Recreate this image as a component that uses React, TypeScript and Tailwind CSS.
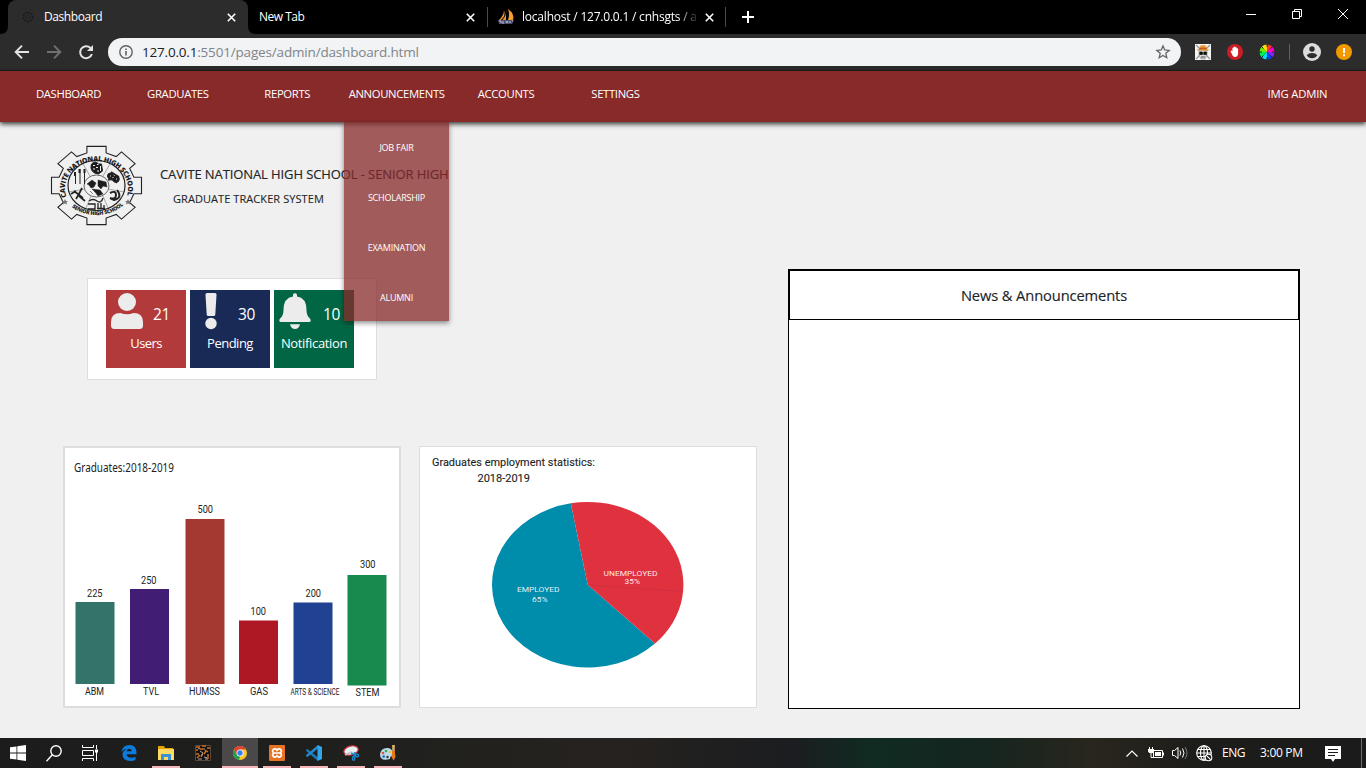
import React from "react";

function TabX() {
  return (
    <svg width="9" height="9" viewBox="0 0 9 9" stroke="#fff" strokeWidth="1.6">
      <path d="M.8.8l7.4 7.4M8.2.8L.8 8.2" />
    </svg>
  );
}

function TabStrip() {
  return (
    <div className="flex h-[34px] bg-black text-white text-[12px]">
      <svg width="8" height="34" viewBox="0 0 8 34">
        <path d="M8 26v8H0Q8 34 8 26z" fill="#2c2c2c" />
      </svg>
      <div className="flex h-[34px] w-[240px] items-center rounded-t-lg bg-[#2c2c2c] pl-[14px] pr-[12px]">
        <svg width="12" height="12" viewBox="0 0 12 12" fill="none" stroke="#1b1b1b">
          <circle cx="6" cy="6" r="4.6" strokeWidth="1.6" strokeDasharray="2 1" />
          <circle cx="6" cy="6" r="2" strokeDasharray="1.5 1" />
        </svg>
        <span className="ml-[10px] flex-1 tracking-[-0.42px]">Dashboard</span>
        <TabX />
      </div>
      <svg width="8" height="34" viewBox="0 0 8 34">
        <path d="M0 26v8h8Q0 34 0 26z" fill="#2c2c2c" />
      </svg>
      <div className="flex h-[34px] w-[231px] items-center pl-[3px] pr-[12px]">
        <span className="flex-1 tracking-[-0.5px]">New Tab</span>
        <TabX />
      </div>
      <div className="mt-[7px] h-5 w-px bg-[#4a4a4a]" />
      <div className="flex h-[34px] w-[237px] items-center pl-[10px] pr-[11px]">
        <svg width="17" height="16" viewBox="0 0 17 16">
          <path d="M6 1Q8 7 3 11H1Q6 6 6 1zM8 0v11H4.500Q9 6 8 0z" fill="#e9952c" />
          <path d="M10 0Q17 5 15 11H10Q12 5 10 0z" fill="#f7a133" />
          <path d="M0 11h16l-2 4H1z" fill="#4c5070" />
          <path d="M1 12h2v2M5 12v3M8 12l1 2 1-2M12 12v2M14 12h1" stroke="#b9bed4" fill="none" />
        </svg>
        <span className="ml-[7px] w-[174px] overflow-hidden whitespace-nowrap tracking-[-0.21px] [mask-image:linear-gradient(to_right,black_155px,transparent_178px)]">
          localhost / 127.0.0.1 / cnhsgts / a
        </span>
        <span className="flex-1" />
        <TabX />
      </div>
      <div className="mt-[7px] h-5 w-px bg-[#4a4a4a]" />
      <svg className="ml-[16px] mt-[11px]" width="12" height="12" viewBox="0 0 12 12" stroke="#fff" strokeWidth="2">
        <path d="M6 0v12M0 6h12" />
      </svg>
      <div className="flex flex-1 items-start justify-end pr-[16px] pt-[9px]">
        <svg width="104" height="11" viewBox="0 0 104 11" fill="none" stroke="#fff">
          <path d="M0 5.500h10M46.500 2.500h7v7h-7zM48.500 2.500v-2h7v7h-2M92 0l10 10M102 0L92 10" />
        </svg>
      </div>
    </div>
  );
}

function Toolbar() {
  return (
    <div className="flex h-[37px] items-start border-b border-[#1c1c1c] bg-[#2c2c2c] pt-1">
      <div className="flex h-7 w-[108px] items-center">
        <svg className="ml-[14px]" width="16" height="16" viewBox="0 0 16 16" fill="none" stroke="#e3e3e3" strokeWidth="1.9">
          <path d="M15 8H2.500M8 1.700L1.700 8 8 14.300" />
        </svg>
        <svg className="ml-[16px]" width="16" height="16" viewBox="0 0 16 16" fill="none" stroke="#707070" strokeWidth="1.9">
          <path d="M1 8h12.500M8 1.700L14.300 8 8 14.300" />
        </svg>
        <svg className="ml-[16px]" width="16" height="16" viewBox="0 0 16 16" fill="none" stroke="#e3e3e3" strokeWidth="2">
          <path d="M13.900 10A6 6 0 1 1 12.300 3.800L13.500 5" />
          <path d="M15 1v6H9z" fill="#e3e3e3" stroke="none" />
        </svg>
      </div>
      <div className="flex h-7 w-[1073px] items-center rounded-full bg-[#f1f3f4] pl-[11px] pr-[10px]">
        <svg width="14" height="14" viewBox="0 0 14 14" fill="none" stroke="#5f6368" strokeWidth="1.4">
          <circle cx="7" cy="7" r="6.200" />
          <path d="M7 6v4.500M7 3.400v1.500" strokeWidth="1.600" />
        </svg>
        <span className="ml-[9px] flex-1 pt-px text-[13.5px] leading-none text-[#808489]">
          <span className="text-[#202124] tracking-[-0.2px]">127.0.0.1</span><span className="tracking-[-0.17px]">:5501/pages/admin/dashboard.html</span>
        </span>
        <svg width="16" height="16" viewBox="0 0 16 16" fill="none" stroke="#5f6368" strokeWidth="1.300">
          <path d="M8 1.900l1.700 4.100 4.500.4-3.400 2.900 1 4.400L8 11.400l-3.800 2.300 1-4.400-3.400-2.900 4.500-.4z" />
        </svg>
      </div>
      <div className="flex h-7 flex-1 items-center">
        <svg className="ml-[14px]" width="16" height="16" viewBox="0 0 16 16">
          <path d="M0 0h16v16H0z" fill="#f5f5f2" />
          <path d="M1 1l14 14M15 1L1 15" stroke="#999" strokeWidth="1.300" />
          <path d="M4 6h8v5l-2 4H6l-2-4z" fill="#e5e5e5" stroke="#777" strokeWidth=".6" />
          <path d="M4 5Q4 1 8 1t4 4z" fill="#e8a43a" />
          <path d="M1 6Q8 3 15 6 8 7.200 1 6z" fill="#d68a25" />
          <path d="M4.500 4.500Q8 3.500 11.500 4.500" stroke="#b73c25" fill="none" />
          <path d="M4.800 8h2.600v2.600H4.800zM8.800 8h2.600v2.600H8.800zM6 13h4" fill="#111" stroke="#111" strokeWidth=".8" />
        </svg>
        <svg className="ml-[16px]" width="16" height="16" viewBox="0 0 16 16">
          <circle cx="8" cy="8" r="8" fill="#cc1c27" />
          <path d="M4.200 8.400L3.400 7l.9-.6 1.100 1.100V4q.7-.9 1.300 0V3q.8-.9 1.500 0v.4q.8-.8 1.400.1v1q1.200-.7 1.500.3v4.700Q10.800 12.900 8.200 12.900T4.200 8.400z" fill="#fff" />
        </svg>
        <svg className="ml-[16px]" width="16" height="16" viewBox="0 0 16 16">
          <path d="M8 8V.5A7.500 7.500 0 0 1 13.300 2.700z" fill="#f33" />
          <path d="M8 8l5.300-5.300A7.500 7.500 0 0 1 15.500 8z" fill="#f0c" />
          <path d="M8 8h7.500a7.500 7.500 0 0 1-2.200 5.300z" fill="#82f" />
          <path d="M8 8l5.300 5.300A7.500 7.500 0 0 1 8 15.500z" fill="#04e" />
          <path d="M8 8v7.500a7.500 7.500 0 0 1-5.300-2.200z" fill="#0df" />
          <path d="M8 8l-5.300 5.300A7.500 7.500 0 0 1 .5 8z" fill="#0e5" />
          <path d="M8 8H.5A7.500 7.500 0 0 1 2.700 2.700z" fill="#6e0" />
          <path d="M8 8L2.700 2.700A7.500 7.500 0 0 1 8 .5z" fill="#fd0" />
          <path d="M8 0v3M8 13v3M0 8h3M13 8h3M2.500 2.500l2 2M13.500 2.500l-2 2M2.500 13.500l2-2M13.500 13.500l-2-2" stroke="#1c1c1c" strokeWidth=".9" />
        </svg>
        <div className="ml-[14px] h-4 w-px bg-[#606060]" />
        <svg className="ml-[13px]" width="18" height="18" viewBox="0 0 18 18">
          <circle cx="9" cy="9" r="9" fill="#dcdcdc" />
          <circle cx="9" cy="6" r="2.700" fill="#2c2c2c" />
          <path d="M3.700 12.300Q5.500 10 9 10t5.300 2.300Q12.500 15.300 9 15.300t-5.300-3z" fill="#2c2c2c" />
        </svg>
        <svg className="ml-[15px]" width="16" height="16" viewBox="0 0 16 16">
          <circle cx="8" cy="8" r="8" fill="#f29900" />
          <path d="M7 4h2v5H7zM7 10.200h2v2H7z" fill="#fff" />
        </svg>
      </div>
    </div>
  );
}

const NAV = ["DASHBOARD", "GRADUATES", "REPORTS", "ANNOUNCEMENTS", "ACCOUNTS", "SETTINGS"];
const MENU = ["JOB FAIR", "SCHOLARSHIP", "EXAMINATION", "ALUMNI"];

function NavBar() {
  return (
    <nav className="relative z-10 flex h-[51px] items-start bg-[#882a2a] pl-[13.800px] text-[11.300px] leading-[46px] tracking-[-0.34px] text-white shadow-[0_2px_5px_rgba(0,0,0,0.8)]">
      {NAV.map((n) => (
        <div key={n} className="relative flex w-[109.400px] justify-center">
          <span className="whitespace-nowrap">{n}</span>
          {n === "ANNOUNCEMENTS" && (
            <div className="absolute left-[2px] top-[51px] h-[199px] w-[105px] bg-[#882a2a]/75 pt-px text-center text-[9px] leading-[50px] tracking-[-0.23px] shadow-[0_2px_5px_rgba(0,0,0,0.45)]">
              {MENU.map((m) => (
                <div key={m} className="h-[50px]">{m}</div>
              ))}
            </div>
          )}
        </div>
      ))}
      <div className="flex-1" />
      <div className="w-[137px] text-center tracking-[-0.2px]">IMG ADMIN</div>
    </nav>
  );
}

function gearPath() {
  const pts: string[] = [];
  for (let i = 0; i < 8; i++) {
    const a = (i * Math.PI) / 4;
    const corner = (r: number, d: number) => {
      const x = 46.5 + r * Math.cos(a + d) * 46;
      const y = 40.5 + r * Math.sin(a + d) * 40;
      pts.push(x.toFixed(1) + " " + y.toFixed(1));
    };
    corner(0.84, -0.25);
    corner(1.0, -0.21);
    corner(1.0, 0.21);
    corner(0.84, 0.25);
  }
  return "M" + pts.join("L") + "z";
}

function SchoolSeal() {
  return (
    <svg className="mt-px overflow-visible" width="93" height="82" viewBox="0 0 93 82" fill="none" stroke="#222">
      <path d={gearPath()} strokeWidth="1.100" />
      <ellipse cx="46.500" cy="40.500" rx="28.500" ry="25" strokeWidth="1.200" />
      <path id="sealTop" d="M16.500 52A31.500 27.500 0 1 1 76.500 52" stroke="none" />
      <path id="sealBottom" d="M19.500 60A36.500 31 0 0 0 73.500 60" stroke="none" />
      <text fontSize="7" fontWeight="800" fill="#1c1c1c" stroke="none" fontFamily="Open Sans">
        <textPath href="#sealTop" textLength="108">CAVITE NATIONAL HIGH SCHOOL</textPath>
      </text>
      <text fontSize="5.400" fontWeight="800" fill="#1c1c1c" stroke="none" fontFamily="Open Sans">
        <textPath href="#sealBottom" textLength="56" startOffset="3">SENIOR HIGH SCHOOL</textPath>
      </text>
      <ellipse cx="46.500" cy="41" rx="12.500" ry="11" stroke="#666" />
      <path d="M40 31l-7-12M53 31l7-12M35 44l-16 3M58 44l16 3M41 51l-5 12M53 51l5 12" stroke="#888" strokeWidth=".7" />
      <path d="M37 39l5-4 4 3-2 4-3 1-2-3zM48 35l8 2 1 5-4-1-2 3-3-3zM42 44l8 1 3 4-5 2-3-4zM40 46l3 3" fill="#1c1c1c" strokeWidth=".5" />
      <path d="M41.500 19q4-4 7 0l3 0 1 7-4 3-4-1q-5-3-3-9z" fill="#1c1c1c" />
      <path d="M43 20.500h2M47 19.500h1.500M43 24h2M47 26h2M50.500 21v5M46 22.500h2" stroke="#f0f0f0" />
      <path d="M25.500 27v12M30 24v15M34.500 24v15" />
      <path d="M29.500 24v4M25 27v4M34.500 24v4" strokeWidth="2" />
      <path d="M24 46l9 7M32 43l-3 6-3 5M21 49l5-3M29 51l6 5" strokeWidth="1.700" />
      <circle cx="60.500" cy="31" r="3" fill="#1c1c1c" />
      <circle cx="66" cy="34" r="3.300" fill="#1c1c1c" />
      <path d="M58 30l7 7M61 27l8 5M58 35q5-2 9 3" strokeWidth="1.500" />
      <path d="M60 31h1M66 34h1M63 32v1" stroke="#f0f0f0" />
      <path d="M60 48q6-3 6 2t-6 3M67 45q6 8-3 10l-4-2" strokeWidth="2" />
      <path d="M39 56q4-3 8 0t6-3M38 59h7v5h-7M48 58v6M51 58v6M54 60v4M47 63.500h8" strokeWidth="1.300" />
      <path d="M15 54l1 2 2 0-1.500 1.500.5 2-2-1-2 1 .5-2-1.500-1.500 2 0zM78 54l1 2 2 0-1.500 1.500.5 2-2-1-2 1 .5-2-1.500-1.500 2 0z" fill="#777" stroke="none" />
    </svg>
  );
}

function Tiles() {
  return (
    <div className="ml-[87px] flex h-[102px] w-[290px] gap-1 border border-[#dedede] bg-white pl-[18px] pt-[11px] text-white">
      <div className="h-[78px] w-20 bg-[#b33a3a]">
        <div className="flex h-[42px]">
          <svg className="ml-[5px] mt-[3px]" width="32" height="37" viewBox="0 0 32 37" fill="#ececec">
            <circle cx="16" cy="9" r="9" />
            <path d="M9.500 20q6.500 2.500 13 0Q32 20 32 29v3.500q0 3.500-3.500 3.500h-25Q0 36 0 32.500V29Q0 20 9.500 20z" />
          </svg>
          <span className="ml-[10px] mt-[12px] text-[15.500px] leading-6 tracking-[-0.45px]">21</span>
        </div>
        <div className="text-center text-[13px] leading-[23px] tracking-[-0.6px]">Users</div>
      </div>
      <div className="h-[78px] w-20 bg-[#1a2a57]">
        <div className="flex h-[42px]">
          <svg className="ml-[15px] mt-[3px]" width="12" height="37" viewBox="0 0 12 37" fill="#ececec">
            <path d="M.5 1.500Q.5 0 2 0h8q1.500 0 1.500 1.500l-1.200 20Q10.200 23 8.500 23h-5Q1.800 23 1.700 21.500z" />
            <circle cx="6" cy="30.500" r="5.700" />
          </svg>
          <span className="ml-[21px] mt-[12px] text-[15.500px] leading-6 tracking-[-0.45px]">30</span>
        </div>
        <div className="text-center text-[13px] leading-[23px] tracking-[-0.5px]">Pending</div>
      </div>
      <div className="h-[78px] w-20 bg-[#006644]">
        <div className="flex h-[42px]">
          <svg className="ml-[5px] mt-[3px]" width="32" height="37" viewBox="0 0 32 37" fill="#ececec">
            <path d="M14 1.800a2.100 2.100 0 0 1 4 0v1.800Q27.500 5 27.500 17q0 6 3.800 9 1.200 3-1.300 3H2Q-.5 29 .7 26 4.500 23 4.500 17 4.500 5 14 3.600zM11 31.300h10Q20 36 16 36t-5-4.700z" />
          </svg>
          <span className="ml-[12px] mt-[12px] text-[15.500px] leading-6 tracking-[-0.45px]">10</span>
        </div>
        <div className="text-center text-[13px] leading-[23px] tracking-[-0.35px]">Notification</div>
      </div>
    </div>
  );
}

const BARS = [
  { label: "ABM", value: 225, x: 75.5, top: 602, bottom: 684, fill: "#32736a", vx: 87, vy: 597, lx: 85, lw: 19 },
  { label: "TVL", value: 250, x: 130, top: 589, bottom: 684, fill: "#411d73", vx: 141, vy: 584, lx: 143, lw: 16 },
  { label: "HUMSS", value: 500, x: 185.5, top: 519, bottom: 684, fill: "#a43931", vx: 197.5, vy: 513, lx: 189, lw: 31 },
  { label: "GAS", value: 100, x: 239, top: 620.5, bottom: 684, fill: "#ae1825", vx: 250.5, vy: 614.5, lx: 250, lw: 18 },
  { label: "ARTS & SCIENCE", value: 200, x: 293.5, top: 602.5, bottom: 684, fill: "#214192", vx: 305.5, vy: 596.5, lx: 290.5, lw: 49 },
  { label: "STEM", value: 300, x: 347.5, top: 575, bottom: 685.5, fill: "#198a4e", vx: 360, vy: 568, lx: 355.5, lw: 24 },
];

function BarChart() {
  return (
    <div className="h-[262px] w-[338px] border-2 border-[#dedede] bg-white">
      <svg width="334" height="258" viewBox="65 448 334 258" fill="#222" fontFamily="Roboto, sans-serif">
        <text x="74" y="471.500" fontSize="11.800" fontFamily="Noto Sans, sans-serif" textLength="100" lengthAdjust="spacingAndGlyphs">Graduates:2018-2019</text>
        {BARS.map((b) => (
          <g key={b.label}>
            <rect x={b.x} y={b.top} width="39" height={b.bottom - b.top} fill={b.fill} />
            <text x={b.vx} y={b.vy} fontSize="11.500" textLength="15.500" lengthAdjust="spacingAndGlyphs">{b.value}</text>
            {b.label === "ARTS & SCIENCE" ? (
              <text transform="translate(290.5 695) scale(1 1.45)" fontSize="6.500" textLength="49" lengthAdjust="spacingAndGlyphs">{b.label}</text>
            ) : (
              <text x={b.lx} y={b.label === "STEM" ? 696 : 695} fontSize="11.500" textLength={b.lw} lengthAdjust="spacingAndGlyphs">{b.label}</text>
            )}
          </g>
        ))}
      </svg>
    </div>
  );
}

function PieChart() {
  return (
    <div className="ml-[18px] h-[262px] w-[338px] border border-[#dedede] bg-white">
      <svg width="336" height="260" viewBox="420 447 336 260" fontFamily="Roboto, sans-serif">
        <g fill="#1c1c1c" fontSize="10.300" stroke="#1c1c1c" strokeWidth=".1">
          <text x="432" y="466" textLength="163" lengthAdjust="spacingAndGlyphs">Graduates employment statistics:</text>
          <text x="477.500" y="481.800" textLength="52.500" lengthAdjust="spacingAndGlyphs">2018-2019</text>
        </g>
        <path d="M587.700 584.700L655 643.500A95.700 82.700 0 1 1 570.800 503.300z" fill="#008cab" />
        <path d="M587.700 584.700L570.800 503.300A95.700 82.700 0 0 1 655 643.500z" fill="#e0313f" />
        <path d="M588 585l95 6.500" stroke="#bd2f40" strokeWidth=".5" />
        <g fill="#fff" fillOpacity=".9" fontSize="7.800">
          <text x="517" y="592" textLength="42.500" lengthAdjust="spacingAndGlyphs">EMPLOYED</text>
          <text x="532" y="601.500" textLength="15.500" lengthAdjust="spacingAndGlyphs">65%</text>
          <text x="603.500" y="576" textLength="54" lengthAdjust="spacingAndGlyphs">UNEMPLOYED</text>
          <text x="624.500" y="584.300" textLength="15.500" lengthAdjust="spacingAndGlyphs">35%</text>
        </g>
      </svg>
    </div>
  );
}

function Page() {
  return (
    <main className="flex flex-1 bg-[#f0f0f0]">
      <section className="w-[788px]">
        <div className="flex h-[156px] pl-[50px] pt-[22px]">
          <SchoolSeal />
          <div className="ml-[17px] whitespace-nowrap pt-[19px] text-[#212529]">
            <div className="text-[13px] leading-[22px] tracking-[-0.1px] [-webkit-text-stroke:0.15px_#212529]">CAVITE NATIONAL HIGH SCHOOL - SENIOR HIGH</div>
            <div className="ml-[13px] pt-[3px] text-[11px] leading-[22px] tracking-[0.07px] [-webkit-text-stroke:0.1px_#212529]">GRADUATE TRACKER SYSTEM</div>
          </div>
        </div>
        <Tiles />
        <div className="mt-[66px] flex pl-[63px]">
          <BarChart />
          <PieChart />
        </div>
      </section>
      <section className="mt-[147px] h-[440px] w-[512px] border border-black bg-white">
        <h2 className="h-[50px] border border-black text-center text-[14.700px] leading-[49px] tracking-[-0.12px] text-[#212529] [-webkit-text-stroke:0.15px_#212529]">
          News &amp; Announcements
        </h2>
      </section>
    </main>
  );
}

const RUN = "flex h-[30px] w-7 items-center justify-center border-b-2 border-[#f6b5bb] pt-[2px]";

function Taskbar() {
  return (
    <footer className="flex h-[30px] items-center bg-[linear-gradient(90deg,#1c1c1c_0%,#20211e_30%,#26221f_45%,#1b1d20_58%,#102b22_64%,#15251f_72%,#29261d_80%,#1c1c1a_88%,#1b1b1b_100%)] text-white">
      <svg className="ml-[10px]" width="16" height="16" viewBox="0 0 16 16" fill="#fff">
        <path d="M0 2.300L6.500 1.400v6.200H0zM7.300 1.300L16 0v7.600H7.300zM0 8.400h6.500v6.200L0 13.700zM7.300 8.400H16V16l-8.700-1.300z" />
      </svg>
      <svg className="ml-[20px]" width="16" height="17" viewBox="0 0 16 17" fill="none" stroke="#fff" strokeWidth="1.400">
        <circle cx="10" cy="6" r="5.200" />
        <path d="M6.300 9.700L.5 16.200" />
      </svg>
      <svg className="ml-[20px]" width="17" height="16" viewBox="0 0 17 16" fill="none" stroke="#fff">
        <path d="M.5 0v2.500h11V0M.5 16v-2.500h11V16M.5 5.500h11v5H.5zM14.500 0v4M14.500 7v9" />
        <path d="M13 4.500h3v3h-3z" fill="#fff" stroke="none" />
      </svg>
      <svg className="ml-[22px]" width="16" height="16" viewBox="0 0 16 16" fill="#0b7bdc">
        <path d="M.5 7Q1.500 0 8.500 0 15 .2 15.500 7v2.200H5.500q.5 3.500 5 3.500 2.500 0 4-1v3.200q-2.300 1.100-5 1.100Q1.500 15.500 1.500 9.500 1.600 5.500 6 4q-3.500 0-5.500 3zM5.500 6.300h5.300Q10.500 3.700 8.300 3.700 6 3.700 5.500 6.300z" />
      </svg>
      <div className="ml-[15px]">
        <div className={RUN}>
          <svg width="16" height="15" viewBox="0 0 16 15">
            <path d="M0 0h6l1 2h8v3H0z" fill="#e5a400" />
            <path d="M0 3h16v11H0z" fill="#ffda62" />
            <path d="M3 8h10v6h-3v-3H6v3H3z" fill="#3b91d3" />
          </svg>
        </div>
      </div>
      <svg className="ml-[15px]" width="16" height="16" viewBox="0 0 16 16">
        <path d="M0 0h16v16H0z" fill="#151010" />
        <path d="M.5.500h15v15H.5z" stroke="#54483f" fill="none" />
        <path d="M1 2h4M7 1h4M12 3h3M1 5h2M5 4h3M10 5l3 2M2 13l3-3M9 9l2-3M13 9v5M1 9h3" stroke="#d06d1c" strokeWidth="1.500" />
        <path d="M5 6l3 2-2 4M9 12l3 1M3 3l2 1M8 4h2M10 14h3M3 14h4M7 9v2" stroke="#b5a29a" fill="none" />
      </svg>
      <div className="ml-[11px] flex h-[30px] w-9 items-center justify-center border-b-2 border-[#f6b5bb] bg-[#4a4848] pt-[2px]">
        <svg width="14" height="14" viewBox="0 0 14 14">
          <circle cx="7" cy="7" r="7" fill="#fbc62c" />
          <path d="M.9 3.500A7 7 0 0 1 13.100 3.500H7L4 8.700z" fill="#df4335" />
          <path d="M.9 3.500L4.100 8.700 7 10.500 6 14A7 7 0 0 1 .9 3.500z" fill="#269c4d" />
          <circle cx="7" cy="7" r="3.500" fill="#fff" />
          <circle cx="7" cy="7" r="2.700" fill="#397ee9" />
        </svg>
      </div>
      <div className="ml-[5px]">
        <div className={RUN}>
          <svg width="16" height="16" viewBox="0 0 16 16">
            <rect width="16" height="16" rx="1" fill="#e87322" />
            <path d="M4.300 4.500q2-1.500 3.700.8 1.700-2.300 3.700-.8 1.800 2-.8 3.500 2.600 1.500.8 3.500-2 1.500-3.700-.8-1.700 2.300-3.700.8-1.800-2 .8-3.500-2.600-1.500-.8-3.500zM6 8h4" fill="none" stroke="#fff" strokeWidth="1.700" />
          </svg>
        </div>
      </div>
      <div className="ml-[9px]">
        <div className={RUN}>
          <svg width="16" height="16" viewBox="0 0 16 16">
            <path d="M0 5l1.500-1L12 12.500V16L.2 6z" fill="#1979bb" />
            <path d="M0 11l1.500 1L12 3.500V0L.2 10z" fill="#2489cb" />
            <path d="M11.500 0L16 2v12l-4.500 2z" fill="#33a5ea" />
          </svg>
        </div>
      </div>
      <div className="ml-[9px]">
        <div className={RUN}>
          <svg width="16" height="16" viewBox="0 0 16 16">
            <ellipse cx="8" cy="5.500" rx="7.300" ry="4.500" transform="rotate(-15 8 5.500)" fill="#eaf0f1" stroke="#c92a37" strokeWidth="1.200" />
            <path d="M2 10l6-3 4 2" fill="none" stroke="#b9c5cb" strokeWidth="1.500" />
            <g fill="none" stroke="#1788c7" strokeWidth="1.400">
              <path d="M8 8.500l5 1.500M12 7l-1 5" />
              <ellipse cx="14" cy="10.500" rx="1.700" ry="1.200" />
              <ellipse cx="10.600" cy="13.500" rx="1.200" ry="1.700" />
            </g>
          </svg>
        </div>
      </div>
      <div className="ml-[9px]">
        <div className={RUN}>
          <svg width="17" height="16" viewBox="0 0 17 16">
            <path d="M0 9Q1 3 7 3q5 0 6 5l-1 3q-2 0-2 3Q0 17 0 9z" fill="#b8dce9" />
            <circle cx="3" cy="8" r="1.300" fill="#e34d36" />
            <circle cx="6" cy="6" r="1.300" fill="#37aa54" />
            <circle cx="10" cy="7" r="1.300" fill="#edc52c" />
            <circle cx="3.700" cy="11.500" r="1.300" fill="#265bb7" />
            <circle cx="7.500" cy="12" r="1.200" fill="#333" />
            <path d="M12 0h3l-.3 6h-2.400z" fill="#d6a767" />
            <path d="M12.200 6h2.600l.7 6-2 3.500-2-3.500z" fill="#e67919" />
          </svg>
        </div>
      </div>
      <div className="flex-1" />
      <svg width="12" height="7" viewBox="0 0 12 7" fill="none" stroke="#fff" strokeWidth="1.200">
        <path d="M.5 6.500L6 1l5.500 5.500" />
      </svg>
      <svg className="ml-[10px]" width="16" height="12" viewBox="0 0 16 12" fill="none" stroke="#fff">
        <path d="M5.500 3.500h9v7h-9zM15.500 5.500v3M1.500 0v2M4.500 0v2M3 6.500v4h2.500" />
        <path d="M0 2h6v2.500Q5 6.500 3 6.500T0 4.500zM7 5h6v4H7z" fill="#fff" stroke="none" />
      </svg>
      <svg className="ml-[8px]" width="17" height="14" viewBox="0 0 17 14" fill="none" stroke="#fff">
        <path d="M.5 4.500h2L6 1.500v11L2.500 9.500h-2zM8 4.500q1.500 2.500 0 5M10.500 2.500q3 4.500 0 9" />
        <path d="M13 1q4 6 0 12" stroke="#777" />
      </svg>
      <svg className="ml-[7px]" width="17" height="17" viewBox="0 0 17 17" fill="none" stroke="#fff" strokeWidth="1.100">
        <circle cx="8" cy="8" r="7.300" />
        <ellipse cx="8" cy="8" rx="3.500" ry="7.300" />
        <path d="M8 .5v15M1.500 4.500h13M.5 8h15M1.500 11.500h8" />
        <circle cx="12.500" cy="12.500" r="3.300" fill="#1c1c1c" />
        <path d="M10.300 10.300l4.400 4.400" />
      </svg>
      <span className="ml-[9px] w-[38px] text-[12px] tracking-[-0.5px]">ENG</span>
      <span className="w-[44px] whitespace-nowrap text-[12px] tracking-[-0.3px]">3:00 PM</span>
      <svg className="ml-[21px] mt-px" width="16" height="16" viewBox="0 0 16 16">
        <path d="M0 0h16v13h-6l-2 3-2-3H0z" fill="#fff" />
        <path d="M3 3.500h10M3 6.500h10M3 9.500h7" stroke="#1c1c1c" />
      </svg>
      <div className="ml-[20px] h-[30px] w-px bg-[#6a6a6a]" />
      <div className="w-1" />
    </footer>
  );
}

export default function App() {
  return (
    <div className="flex h-[768px] w-[1366px] flex-col overflow-hidden font-['Open_Sans','Noto_Sans',sans-serif]">
      <TabStrip />
      <Toolbar />
      <NavBar />
      <Page />
      <Taskbar />
    </div>
  );
}
